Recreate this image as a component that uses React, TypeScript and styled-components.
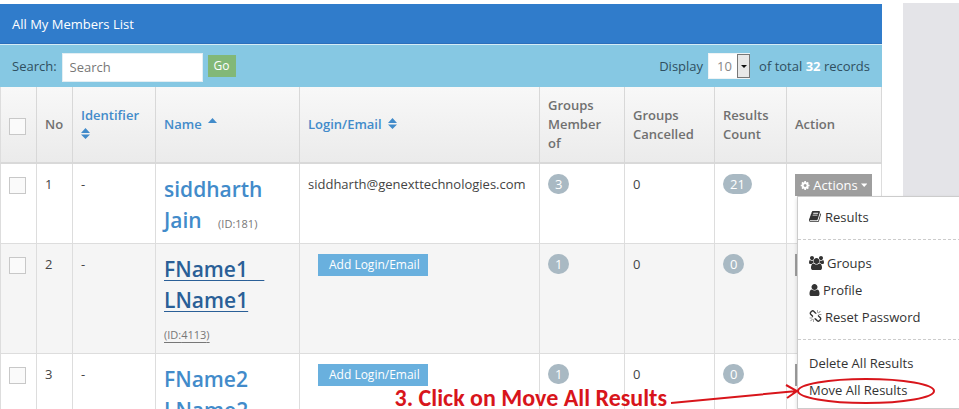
import React from "react";
import styled, { createGlobalStyle, css } from "styled-components";

const Global = createGlobalStyle`
  * { box-sizing: border-box; }
  body {
    margin: 0;
    background: #fff;
    color: #444;
    font: 13px/20px "Open Sans", "Noto Sans", sans-serif;
  }
  button, input, select { font: inherit; }
`;

const Page = styled.div`
  display: grid;
  grid-template-columns: minmax(0, 1fr) 56px;
  gap: 21px;
  height: 100vh;
  padding-top: 3px;
  overflow: hidden;
`;

const Panel = styled.main`
  padding-top: 1px;
  min-width: 0;
`;

const Sidebar = styled.aside`
  background: #e4e4e8;
`;

const Title = styled.h1`
  margin: 0;
  padding: 10px 12px 9px;
  background: #307ccb;
  border-bottom: 1px solid #2c6fbb;
  color: #fff;
  font-size: 13px;
  font-weight: 400;
  line-height: 20px;
`;

const Toolbar = styled.form`
  display: flex;
  align-items: center;
  justify-content: space-between;
  height: 43px;
  padding: 0 12px;
  background: #86c8e3;
  border-top: 1px solid #d5ecf5;
  color: #2f4f60;
`;

const ToolGroup = styled.div`
  display: flex;
  align-items: center;
`;

const SearchInput = styled.input`
  width: 141px;
  height: 29px;
  margin: 2px 5px 0;
  padding: 0 7px;
  border: 1px solid #e3eef3;
  background: #fff;
  color: #555;
  &::placeholder { color: #777; opacity: 1; }
`;

const GoButton = styled.button`
  width: 28px;
  height: 22px;
  padding: 0;
  border: 0;
  background: #82b878;
  color: #fff;
  font-size: 12px;
`;

const SelectBox = styled.span`
  display: inline-flex;
  position: relative;
  margin: 0 9px 0 5px;
`;

const SelectArrow = styled.svg`
  position: absolute;
  top: 1px;
  right: 0;
  pointer-events: none;
`;

const PageSize = styled.select`
  width: 42px;
  height: 26px;
  padding: 0 8px;
  appearance: none;
  border: 1px solid #eef3f5;
  border-radius: 0;
  background: #fff;
  color: #888;
`;

const Total = styled.strong`
  color: #fff;
`;

const Table = styled.table`
  width: 100%;
  table-layout: fixed;
  border-collapse: separate;
  border-spacing: 0;
`;

const Column = styled.col<{ $width?: number }>`
  ${(p) => p.$width && css`width: ${p.$width}px;`}
`;

const HeadCell = styled.th`
  height: 77px;
  padding: 9px 8px;
  border-right: 1px solid #d8d8d8;
  border-bottom: 2px solid #d9d9d9;
  background: linear-gradient(#f8f8f8, #ebebeb);
  color: #707070;
  font-weight: 600;
  line-height: 19px;
  text-align: left;
  vertical-align: middle;
  &:first-child { border-left: 1px solid #ddd; }
`;

const SortLink = styled.a`
  color: #428bca;
  text-decoration: none;
`;

const Arrows = styled.svg<{ $spaced?: boolean }>`
  margin-left: ${(p) => (p.$spaced ? 3 : 0)}px;
`;

const Row = styled.tr`
  height: 80px;
  &:nth-child(even) { background: #f5f5f5; }
`;

const Cell = styled.td`
  padding: 10px 8px 4px;
  border-right: 1px solid #ddd;
  border-bottom: 1px solid #ddd;
  vertical-align: top;
  &:first-child { border-left: 1px solid #ddd; }
`;

const Check = styled.input`
  display: block;
  width: 17px;
  height: 17px;
  margin: 3px 0 0;
  appearance: none;
  border: 1px solid #c8c8c8;
  background: #fafafa;
  &:checked { background: #428bca; }
`;

const NameLink = styled.a<{ $active?: boolean }>`
  color: ${(p) => (p.$active ? "#2a5f97" : "#428bca")};
  font-size: 21px;
  font-weight: 600;
  line-height: 31px;
  white-space: pre-wrap;
  text-decoration: ${(p) => (p.$active ? "underline" : "none")};
  text-decoration-thickness: 1px;
  text-underline-offset: 3px;
`;

const MemberId = styled.small<{ $ownLine?: boolean }>`
  color: #777;
  font-size: 11px;
  ${(p) =>
    p.$ownLine
      ? css`
          display: block;
          margin-top: 4px;
          line-height: 29px;
          text-decoration: underline;
          text-underline-offset: 3px;
        `
      : css`margin-left: 13px;`}
`;

const Badge = styled.span`
  display: inline-block;
  min-width: 21px;
  padding: 0 7px;
  border-radius: 10px;
  background: #a9b9c3;
  color: #fff;
  text-align: center;
`;

const AddButton = styled.button`
  display: block;
  height: 22px;
  margin-left: 10px;
  padding: 0 8px 0 11px;
  border: 0;
  background: #69b0de;
  color: #fff;
  font-size: 12px;
  white-space: nowrap;
`;

const ActionWrap = styled.div`
  position: relative;
`;

const ActionButton = styled.button`
  display: flex;
  align-items: center;
  gap: 3px;
  width: 77px;
  height: 22px;
  padding: 0 5px;
  border: 0;
  background: #9e9e9e;
  color: #fff;
`;

const Menu = styled.ul`
  position: absolute;
  z-index: 2;
  top: 22px;
  left: 2px;
  width: 200px;
  margin: 0;
  padding: 6px 0 5px;
  border: 1px solid #ccc;
  background: #fff;
  box-shadow: 0 2px 4px rgba(0, 0, 0, 0.15);
  list-style: none;
`;

const MenuItem = styled.li`
  position: relative;
  padding: 3px 11px;
`;

const MenuLink = styled.a`
  display: flex;
  align-items: center;
  gap: 3px;
  height: 21px;
  color: #333;
  text-decoration: none;
  white-space: nowrap;
`;

const Divider = styled.li`
  height: 1px;
  margin: 9px 0;
  border-top: 1px dashed #ccc;
`;

const Callout = styled.div`
  position: absolute;
  z-index: 3;
  top: 2px;
  right: calc(100% - 139px);
  display: flex;
  align-items: flex-start;
  color: #d8151b;
  font: 700 24px/24px Carlito, Lato, sans-serif;
  white-space: nowrap;
  pointer-events: none;
  span { padding-top: 8px; }
  svg { flex: none; }
`;

type IconName = "cog" | "book" | "group" | "user" | "unlink";

const icons: Record<IconName, { box: number; d: string }> = {
  cog: {
    box: 1792,
    d: "M1152 896q0-106-75-181t-181-75-181 75-75 181 75 181 181 75 181-75 75-181zm512-109v222q0 12-8 23t-20 13l-185 28q-19 54-39 91 35 50 107 138 10 12 10 25t-9 23q-27 37-99 108t-94 71q-12 0-26-9l-138-108q-44 23-91 38-16 136-29 186-7 28-36 28h-222q-14 0-24.500-8.500t-11.500-21.500l-28-184q-49-16-90-37l-141 107q-10 9-25 9-14 0-25-11-126-114-165-168-7-10-7-23 0-12 8-23 15-21 51-66.500t54-70.500q-27-50-41-99l-183-27q-13-2-21-12.500t-8-23.500v-222q0-12 8-23t19-13l186-28q14-46 39-92-40-57-107-138-10-12-10-24 0-10 9-23 26-36 98.500-107.500t94.500-71.500q13 0 26 10l138 107q44-23 91-38 16-136 29-186 7-28 36-28h222q14 0 24.500 8.500t11.500 21.500l28 184q49 16 90 37l142-107q9-9 24-9 13 0 25 10 129 119 165 170 7 8 7 22 0 12-8 23-15 21-51 66.500t-54 70.500q26 50 41 98l183 28q13 2 21 12.500t8 23.500z",
  },
  book: {
    box: 1792,
    d: "M1639 478q40 57 18 129l-275 906q-19 64-76.500 107.500t-122.500 43.500h-923q-77 0-148.500-53.500t-99.500-131.500q-24-67-2-127 0-4 3-27t4-37q1-8-3-21.500t-3-19.500q2-11 8-21t16.500-23.500 16.500-23.500q23-38 45-91.500t30-91.500q3-10 .5-30t-.5-28q3-11 17-28t17-23q21-36 42-92t25-90q1-9-2.500-32t.5-28q4-13 22-30.500t22-22.500q19-26 42.500-84.500t27.500-96.500q1-8-3-25.500t-2-26.500q2-8 9-18t18-23 17-21q8-12 16.500-30.500t15-35 16-36 19.500-32 26.500-23.500 36-11.500 47.500 5.500l-1 3q38-9 51-9h761q74 0 114 56t18 130l-274 906q-36 119-71.500 153.500t-128.500 34.500h-869q-27 0-38 15-11 16-1 43 24 70 144 70h923q29 0 56-15.500t35-41.500l300-987q7-22 5-57 38 15 59 43zm-1064 2q-4 13 2 22.500t20 9.500h608q13 0 25.500-9.500t16.500-22.500l21-64q4-13-2-22.500t-20-9.500h-608q-13 0-25.500 9.500t-16.500 22.500zm-83 256q-4 13 2 22.500t20 9.500h608q13 0 25.500-9.500t16.500-22.500l21-64q4-13-2-22.500t-20-9.500h-608q-13 0-25.500 9.500t-16.500 22.500z",
  },
  group: {
    box: 1920,
    d: "M593 896q-162 5-265 128h-134q-82 0-138-40.500t-56-118.500q0-353 124-353 6 0 43.500 21t97.500 42.500 119 21.500q67 0 133-23-5 37-5 66 0 139 81 256zm1071 637q0 120-73 189.500t-194 69.500h-874q-121 0-194-69.500t-73-189.500q0-53 3.500-103.500t14-109 26.500-108.500 43-97.500 62-81 85.500-53.500 111.500-20q10 0 43 21.500t73 48 107 48 135 21.500 135-21.500 107-48 73-48 43-21.500q61 0 111.500 20t85.500 53.500 62 81 43 97.500 26.500 108.500 14 109 3.500 103.500zm-1024-1277q0 106-75 181t-181 75-181-75-75-181 75-181 181-75 181 75 75 181zm704 384q0 159-112.500 271.500t-271.500 112.500-271.500-112.500-112.500-271.500 112.500-271.500 271.500-112.500 271.500 112.500 112.500 271.500zm576 225q0 78-56 118.500t-138 40.500h-134q-103-123-265-128 81-117 81-256 0-29-5-66 66 23 133 23 59 0 119-21.500t97.500-42.500 43.500-21q124 0 124 353zm-128-609q0 106-75 181t-181 75-181-75-75-181 75-181 181-75 181 75 75 181z",
  },
  user: {
    box: 1408,
    d: "M1344 1399q0 109-62.500 187t-150.500 78h-854q-88 0-150.500-78t-62.500-187q0-85 8.500-160.500t31.500-152 58.500-131 94-89 134.500-34.500q131 128 313 128t313-128q76 0 134.500 34.500t94 89 58.500 131 31.500 152 8.500 160.500zm-256-887q0 159-112.500 271.500t-271.500 112.500-271.500-112.500-112.500-271.500 112.500-271.500 271.500-112.500 271.500 112.500 112.500 271.500z",
  },
  unlink: {
    box: 1792,
    d: "M503 1271l-256 256q-10 9-23 9-12 0-23-9-9-10-9-23t9-23l256-256q10-9 23-9t23 9q9 10 9 23t-9 23zm169 41v320q0 14-9 23t-23 9-23-9-9-23v-320q0-14 9-23t23-9 23 9 9 23zm-224-224q0 14-9 23t-23 9h-320q-14 0-23-9t-9-23 9-23 23-9h320q14 0 23 9t9 23zm1264 128q0 120-85 203l-147 146q-83 83-203 83-121 0-204-85l-334-335q-21-21-42-56l239-18 273 274q27 27 68 27.500t68-26.500l147-146q28-28 28-67 0-40-28-68l-274-275 18-239q35 21 56 42l336 336q84 86 84 204zm-617-724l-239 18-273-274q-28-28-68-28-39 0-68 27l-147 146q-28 28-28 67 0 40 28 68l274 274-18 240q-35-21-56-42l-336-336q-84-86-84-204 0-120 85-203l147-146q83-83 203-83 121 0 204 85l334 335q21 21 42 56zm633 84q0 14-9 23t-23 9h-320q-14 0-23-9t-9-23 9-23 23-9h320q14 0 23 9t9 23zm-544-544v320q0 14-9 23t-23 9-23-9-9-23v-320q0-14 9-23t23-9 23 9 9 23zm407 151l-256 256q-11 9-23 9t-23-9q-9-10-9-23t9-23l256-256q10-9 23-9t23 9q9 10 9 23t-9 23z",
  },
};

function Icon({ name, width, height = 13 }: { name: IconName; width: number; height?: number }) {
  return (
    <svg width={width} height={height} viewBox={`0 0 ${icons[name].box} 1792`} fill="currentColor" aria-hidden="true">
      <path d={icons[name].d} />
    </svg>
  );
}

function SortIcon({ ascending, spaced }: { ascending?: boolean; spaced?: boolean }) {
  return (
    <Arrows $spaced={spaced} width="9" height="11" viewBox="0 0 9 11" fill="currentColor" aria-hidden="true">
      <path d={ascending ? "M0 5 4.500 0 9 5Z" : "M0 5 4.500 0 9 5ZM0 6.500H9L4.500 11Z"} />
    </Arrows>
  );
}

function ActionsButton() {
  return (
    <ActionButton type="button">
      <Icon name="cog" width={13} />
      Actions
      <svg width="8" height="5" viewBox="0 0 8 5" fill="currentColor" aria-hidden="true">
        <path d="M0 0H8L4 4.500Z" />
      </svg>
    </ActionButton>
  );
}

function ActionsMenu() {
  return (
    <Menu>
      <MenuItem><MenuLink href="#results"><Icon name="book" width={13} />Results</MenuLink></MenuItem>
      <Divider />
      <MenuItem><MenuLink href="#groups"><Icon name="group" width={15} height={14} />Groups</MenuLink></MenuItem>
      <MenuItem><MenuLink href="#profile"><Icon name="user" width={11} height={14} />Profile</MenuLink></MenuItem>
      <MenuItem><MenuLink href="#reset"><Icon name="unlink" width={13} />Reset Password</MenuLink></MenuItem>
      <Divider />
      <MenuItem><MenuLink href="#delete">Delete All Results</MenuLink></MenuItem>
      <MenuItem>
        <MenuLink href="#move">Move All Results</MenuLink>
        <Callout>
          <span>3. Click on Move All Results</span>
          <svg width="270" height="28" viewBox="0 0 270 28" fill="none" stroke="currentColor" strokeWidth="2">
            <path d="M4 25 130 13M119 7 130 13 120 20" />
            <ellipse cx="199" cy="13" rx="68" ry="12" />
          </svg>
        </Callout>
      </MenuItem>
    </Menu>
  );
}

const members = [
  { name: "siddharth Jain", id: 181, email: "siddharth@genexttechnologies.com", groups: 3, results: 21 },
  { name: "FName1   LName1", id: 4113, groups: 1, results: 0, active: true },
  { name: "FName2 LName2", id: 4114, groups: 1, results: 0 },
];

const widths = [37, 36, 83, 144, undefined, 85, 90, 72, 95];

export default function App() {
  return (
    <Page>
      <Global />
      <Panel>
        <Title>All My Members List</Title>
        <Toolbar>
          <ToolGroup>
            <label htmlFor="search">Search:</label>
            <SearchInput id="search" placeholder="Search" />
            <GoButton type="button">Go</GoButton>
          </ToolGroup>
          <ToolGroup>
            <label htmlFor="size">Display</label>
            <SelectBox>
              <PageSize id="size"><option>10</option></PageSize>
              <SelectArrow width="13" height="24" viewBox="0 0 13 24">
                <rect x="0.500" y="0.500" width="12" height="23" fill="#e8e8e8" stroke="#777" />
                <path d="M4 11H10L7 14Z" fill="#111" />
              </SelectArrow>
            </SelectBox>
            <span>of total <Total>32</Total> records</span>
          </ToolGroup>
        </Toolbar>
        <Table>
          <colgroup>{widths.map((w, i) => <Column key={i} $width={w} />)}</colgroup>
          <thead>
            <tr>
              <HeadCell><Check type="checkbox" aria-label="Select all" /></HeadCell>
              <HeadCell>No</HeadCell>
              <HeadCell><SortLink href="#identifier">Identifier<br /><SortIcon /></SortLink></HeadCell>
              <HeadCell><SortLink href="#name">Name <SortIcon ascending spaced /></SortLink></HeadCell>
              <HeadCell><SortLink href="#login">Login/Email <SortIcon spaced /></SortLink></HeadCell>
              <HeadCell>Groups Member of</HeadCell>
              <HeadCell>Groups Cancelled</HeadCell>
              <HeadCell>Results Count</HeadCell>
              <HeadCell>Action</HeadCell>
            </tr>
          </thead>
          <tbody>
            {members.map((m, i) => (
              <Row key={m.id}>
                <Cell><Check type="checkbox" aria-label={`Select ${m.name}`} /></Cell>
                <Cell>{i + 1}</Cell>
                <Cell>-</Cell>
                <Cell>
                  <NameLink href={`#${m.id}`} $active={m.active}>{m.name}</NameLink>{" "}
                  <MemberId $ownLine={m.active}>(ID:{m.id})</MemberId>
                </Cell>
                <Cell>{m.email ?? <AddButton type="button">Add Login/Email</AddButton>}</Cell>
                <Cell><Badge>{m.groups}</Badge></Cell>
                <Cell>0</Cell>
                <Cell><Badge>{m.results}</Badge></Cell>
                <Cell>
                  <ActionWrap>
                    <ActionsButton />
                    {i === 0 && <ActionsMenu />}
                  </ActionWrap>
                </Cell>
              </Row>
            ))}
          </tbody>
        </Table>
      </Panel>
      <Sidebar />
    </Page>
  );
}
